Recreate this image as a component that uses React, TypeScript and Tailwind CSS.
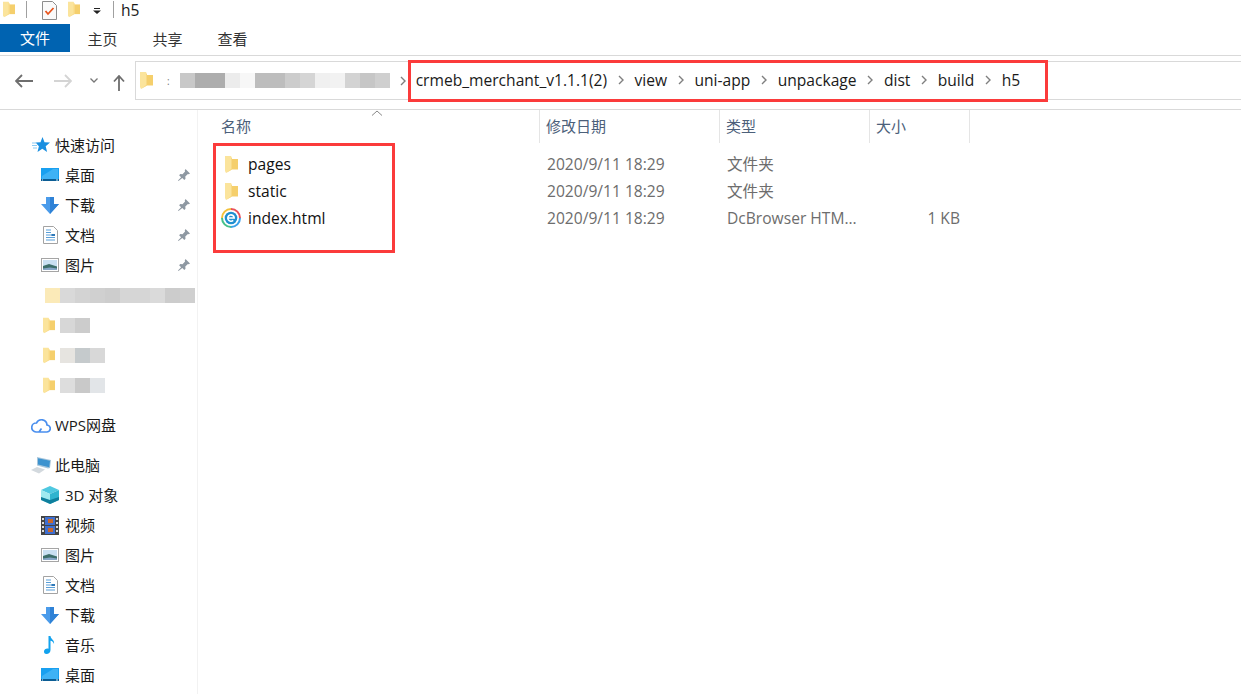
const Folder = ({ className = "w-[13px] h-[17px]" }: { className?: string }) => (
  <svg viewBox="0 0 13 17" className={`${className} shrink-0`}>
    <path d="M6 3h7v10.500H6z" fill="#f5cf6c" />
    <path d="M0 0h6l1 2v11.500L1 17l-1-2z" fill="#fbe49c" />
    <path d="M6 2l1 0v11.500L1 17l5-4z" fill="#f8d984" />
  </svg>
);

const Pin = () => (
  <svg viewBox="0 0 14 14" className="w-[14px] h-[14px] shrink-0">
    <path d="M8.500 1l4.500 4.500-1.200.8-.9-.4-2.600 2.600.2 2.200-1.200 1.200-2-2L1.500 13 1 12.500l3.100-3.300-2-2L3.300 6l2.200.2 2.600-2.600-.4-.9z" fill="#8e98a2" />
  </svg>
);

const DesktopIcon = () => (
  <svg viewBox="0 0 18 14" className="w-[18px] h-[14px]">
    <rect width="18" height="13" fill="#19a0f0" />
    <path d="M1 11V8L12 1h5v10z" fill="#3fb2f5" />
    <rect y="11" width="18" height="2" fill="#0b5d94" />
    <rect x="15" y="11.500" width="2" height="1" fill="#d5eefc" />
    <rect x="1" y="11.500" width="1" height="1" fill="#d5eefc" />
  </svg>
);

const DownloadIcon = () => (
  <svg viewBox="0 0 18 17" className="w-[18px] h-[17px]">
    <path d="M5 0h8v7h5l-9 10-9-10h5z" fill="#4a9bea" />
    <path d="M9 0h4v7h5l-9 10z" fill="#2f82d6" />
  </svg>
);

const DocIcon = () => (
  <svg viewBox="0 0 15 18" className="w-[15px] h-[18px]">
    <path d="M.5.500h10l4 4v13H.5z" fill="#fff" stroke="#a3a3a3" />
    <path d="M3 4h5M3 6.500h5M3 9h9M3 11.500h9M3 14h9" stroke="#5a9fd8" />
    <rect x="8.500" y="8" width="3.500" height="2" fill="#2f79b9" />
  </svg>
);

const PictureIcon = () => (
  <svg viewBox="0 0 18 14" className="w-[18px] h-[14px]">
    <rect x=".5" y=".5" width="17" height="13" fill="#fff" stroke="#a5a5a5" />
    <rect x="2" y="2" width="14" height="10" fill="#c9e0f2" />
    <path d="M2 8l6-2 8 2.500V12H2z" fill="#3c6e6a" />
    <path d="M2 10.500l7-1 7 1V12H2z" fill="#86a6c8" />
  </svg>
);

const CubeIcon = () => (
  <svg viewBox="0 0 18 18" className="w-[18px] h-[18px]">
    <path d="M9 0l9 4-9 4-9-4z" fill="#4fc8e0" />
    <path d="M0 4l9 4v10l-9-4z" fill="#9feaf0" />
    <path d="M18 4L9 8v10l9-4z" fill="#2fb4cf" />
    <path d="M0 11l9 3v4l-9-4zM18 11l-9 3v4l9-4z" fill="#0e7f9d" />
  </svg>
);

const VideoIcon = () => (
  <svg viewBox="0 0 18 19" className="w-[18px] h-[19px]">
    <rect width="18" height="19" fill="#444" />
    <rect x="4" y="1" width="10" height="8" fill="#3f6fd0" />
    <rect x="4" y="10" width="10" height="8" fill="#3f6fd0" />
    <path d="M7 3h5v4H7zM7 12h5v4H7z" fill="#c8672c" />
    <path d="M1 2h2v2H1zM1 6h2v2H1zM1 10h2v2H1zM1 14h2v2H1zM15 2h2v2h-2zM15 6h2v2h-2zM15 10h2v2h-2zM15 14h2v2h-2z" fill="#ddd" />
  </svg>
);

const MusicIcon = () => (
  <svg viewBox="0 0 12 18" className="w-[12px] h-[18px]">
    <path d="M4.500 0H6.500c0 3 4.500 4 3.500 8-.5-2-2-3-3.500-3.300V14c0 2.500-2 4-4 4S0 17 0 15.200 2.500 12 4.500 12.700z" fill="#12a2ee" />
  </svg>
);

const QuickIcon = () => (
  <svg viewBox="0 0 18 16" className="w-[18px] h-[16px]">
    <path d="M10.500 0l2 5.300 5.500.3-4.300 3.600 1.400 5.800-4.800-3.200-4.800 3.200 1.400-5.800L3.500 5.600 8.500 5.300z" fill="#1a8fe0" />
    <path d="M0 6h5M0 8.500h5M1 11h4" stroke="#8ccbf4" />
  </svg>
);

const CloudIcon = () => (
  <svg viewBox="0 0 20 16" className="w-[20px] h-[16px]">
    <path d="M5 15h10.500a3.500 3.500 0 0 0 .5-7 5.500 5.500 0 0 0-10.500-2A4.500 4.500 0 0 0 5 15zM8 15l2.500-3.500" fill="none" stroke="#4a8fee" strokeWidth="1.700" />
  </svg>
);

const PcIcon = () => (
  <svg viewBox="0 0 20 17" className="w-[20px] h-[17px]">
    <path d="M6 0l14 3-1 8-2 .5-11-3z" fill="#a8c6dc" />
    <path d="M7 1.200l12 2.600-.8 6.400-11.200-2.700z" fill="#3d93cf" />
    <path d="M0 13l6-3 8 2.500-6 4z" fill="#d3d9de" />
  </svg>
);

const EdgeIcon = () => (
  <svg viewBox="0 0 20 20" className="w-[20px] h-[20px] shrink-0">
    <circle cx="10" cy="10" r="9" fill="#fff" />
    <path d="M10 1a9 9 0 0 1 9 9" fill="none" stroke="#e8505b" strokeWidth="2" />
    <path d="M19 10a9 9 0 0 1-9 9" fill="none" stroke="#3aa0e8" strokeWidth="2" />
    <path d="M10 19a9 9 0 0 1-9-9" fill="none" stroke="#45c08a" strokeWidth="2" />
    <path d="M1 10a9 9 0 0 1 9-9" fill="none" stroke="#f3c13a" strokeWidth="2" />
    <circle cx="10" cy="10" r="6.300" fill="#1f8fd0" />
    <path d="M6.800 10h6.400a3.200 3.200 0 1 0-1 2.400" fill="none" stroke="#fff" strokeWidth="1.600" />
  </svg>
);

const Chevron = () => (
  <svg viewBox="0 0 6 10" className="w-[6px] h-[10px] shrink-0">
    <path d="M1 1l4 4-4 4" fill="none" stroke="#7f7f7f" strokeWidth="1.400" />
  </svg>
);

const Mosaic = ({ colors, h = "h-[15px]" }: { colors: string[]; h?: string }) => (
  <div className={`flex ${h}`}>
    {colors.map((c, i) => (
      <div key={i} className="w-[15px] h-full" style={{ background: c }} />
    ))}
  </div>
);

const NavRow = ({ icon, label, pin }: { icon: React.ReactNode; label: string; pin?: boolean }) => (
  <div className="h-[30px] flex items-center pl-[41px] pr-[6px]">
    <div className="w-[18px] flex justify-center">{icon}</div>
    <span className="ml-[6px] flex-1">{label}</span>
    {pin && <Pin />}
  </div>
);

const NavHead = ({ icon, label }: { icon: React.ReactNode; label: string }) => (
  <div className="h-[30px] flex items-center pl-[31px]">
    <div className="w-[20px] flex justify-center">{icon}</div>
    <span className="ml-[4px]">{label}</span>
  </div>
);

const BlurRow = ({ colors }: { colors: string[] }) => (
  <div className="h-[30px] flex items-center pl-[43px]">
    <Folder className="w-[12px] h-[17px]" />
    <div className="ml-[5px]">
      <Mosaic colors={colors} />
    </div>
  </div>
);

const files = [
  { name: "pages", type: "文件夹", size: "", icon: <Folder /> },
  { name: "static", type: "文件夹", size: "", icon: <Folder /> },
  { name: "index.html", type: "DcBrowser HTM...", size: "1 KB", icon: <EdgeIcon /> },
];

const crumbs = ["view", "uni-app", "unpackage", "dist", "build", "h5"];

export default function App() {
  return (
    <div className="relative w-[1241px] h-[694px] overflow-hidden bg-white text-[15px] text-[#1a1a1a] font-['Open_Sans','Noto_Sans_CJK_SC',sans-serif]">
      {/* title bar */}
      <div className="h-[24px] flex items-start pl-[3px] pt-[1px]">
        <Folder className="w-[12px] h-[17px]" />
        <div className="ml-[11px] w-px h-[17px] bg-[#a0a0a0]" />
        <svg viewBox="0 0 15 19" className="ml-[15px] w-[15px] h-[19px]">
          <path d="M.5.500h10l4 4v14H.5z" fill="#fafafa" stroke="#8d8d8d" />
          <path d="M3.500 10l2.500 3 5.500-6" fill="none" stroke="#e8541c" strokeWidth="1.800" />
        </svg>
        <Folder className="ml-[11px] w-[12px] h-[17px]" />
        <svg viewBox="0 0 8 6" className="ml-[13px] mt-[7px] w-[8px] h-[6px]">
          <path d="M1 0h6v1H1zM0 2.500h8L4 6z" fill="#222" />
        </svg>
        <div className="ml-[12px] w-px h-[17px] bg-[#a0a0a0]" />
        <span className="ml-[7px] text-[15.6px] leading-[18px]">h5</span>
      </div>

      {/* ribbon tabs */}
      <div className="h-[28px] flex items-center">
        <div className="w-[70px] h-full bg-[#0063b1] text-white flex items-center justify-center">文件</div>
        <div className="w-[65px] text-center text-[#333] pt-[2px]">主页</div>
        <div className="w-[65px] text-center text-[#333] pt-[2px]">共享</div>
        <div className="w-[65px] text-center text-[#333] pt-[2px]">查看</div>
      </div>

      {/* address row */}
      <div className="mt-[3px] h-[55px] border-y border-[#d9d9d9] flex items-center pl-[15px] pb-[4px]">
        <svg viewBox="0 0 18 14" className="w-[18px] h-[14px]">
          <path d="M7 1L1 7l6 6M1 7h17" fill="none" stroke="#6e6e6e" strokeWidth="1.800" />
        </svg>
        <svg viewBox="0 0 18 14" className="ml-[21px] w-[18px] h-[14px]">
          <path d="M11 1l6 6-6 6M17 7H0" fill="none" stroke="#d4d4d4" strokeWidth="1.800" />
        </svg>
        <svg viewBox="0 0 8 5" className="ml-[18px] w-[8px] h-[5px]">
          <path d="M.5.500L4 4 7.500.5" fill="none" stroke="#777" strokeWidth="1.300" />
        </svg>
        <svg viewBox="0 0 12 16" className="ml-[15px] mt-[4px] w-[12px] h-[16px]">
          <path d="M1 6.500L6 1l5 5.500M6 1v15" fill="none" stroke="#6e6e6e" strokeWidth="1.800" />
        </svg>
        <div className="ml-[10px] flex-1 h-[39px] border border-[#d9d9d9] border-r-0 flex items-center pl-[4px]">
          <Folder />
          <span className="ml-[14px] text-[10px] leading-none text-[#777]">:</span>
          <div className="ml-[10px]">
            <Mosaic colors={["#c8c8c8", "#adadad", "#adadad", "#ececec", "#f7f7f7", "#bdbdbd", "#bdbdbd", "#ccc", "#d5d5d5", "#f0f0f0", "#f2f2f2", "#d3d3d3", "#c6c6c6", "#cfcfcf"]} />
          </div>
          <div className="ml-[10px]"><Chevron /></div>
          <span className="ml-[10px] text-[15.6px]">crmeb_merchant_v1.1.1(2)</span>
          {crumbs.map((c) => (
            <div key={c} className="flex items-center">
              <div className="mx-[10.7px]"><Chevron /></div>
              <span className="text-[15.6px]">{c}</span>
            </div>
          ))}
        </div>
      </div>

      {/* main */}
      <div className="flex h-[584px]">
        <aside className="w-[198px] shrink-0 border-r border-[#f2f2f2] pt-[20px]">
          <NavHead icon={<QuickIcon />} label="快速访问" />
          <NavRow icon={<DesktopIcon />} label="桌面" pin />
          <NavRow icon={<DownloadIcon />} label="下载" pin />
          <NavRow icon={<DocIcon />} label="文档" pin />
          <NavRow icon={<PictureIcon />} label="图片" pin />
          <div className="h-[30px] flex items-center pl-[45px]">
            <Mosaic colors={["#fbeab8", "#d9d9d9", "#d3d3d3", "#d0d0d0", "#cdcdcd", "#d6d6d6", "#d6d6d6", "#dadada", "#cccccc", "#cfcfcf"]} />
          </div>
          <BlurRow colors={["#d7d7d7", "#cccccc"]} />
          <BlurRow colors={["#e6e4e0", "#c5cacc", "#d8d8d8"]} />
          <BlurRow colors={["#dddddd", "#c9c9c9", "#e2e5e8"]} />
          <div className="mt-[10px]">
            <NavHead icon={<CloudIcon />} label="WPS网盘" />
          </div>
          <div className="mt-[10px]">
            <NavHead icon={<PcIcon />} label="此电脑" />
          </div>
          <NavRow icon={<CubeIcon />} label="3D 对象" />
          <NavRow icon={<VideoIcon />} label="视频" />
          <NavRow icon={<PictureIcon />} label="图片" />
          <NavRow icon={<DocIcon />} label="文档" />
          <NavRow icon={<DownloadIcon />} label="下载" />
          <NavRow icon={<MusicIcon />} label="音乐" />
          <NavRow icon={<DesktopIcon />} label="桌面" />
        </aside>

        <main className="flex-1 pl-[17px]">
          <div className="relative h-[33px] flex text-[#4c607a]">
            <svg viewBox="0 0 12 6" className="absolute left-[156px] top-0 w-[12px] h-[6px]">
              <path d="M1 5.500L6 1l5 4.500" fill="none" stroke="#888" />
            </svg>
            <div className="w-[325px] pl-[6px] flex items-center border-r border-[#e5e5e5]">名称</div>
            <div className="w-[180px] pl-[6px] flex items-center border-r border-[#e5e5e5]">修改日期</div>
            <div className="w-[150px] pl-[6px] flex items-center border-r border-[#e5e5e5]">类型</div>
            <div className="w-[100px] pl-[6px] flex items-center border-r border-[#e5e5e5]">大小</div>
          </div>
          <div className="pt-[8px]">
            {files.map((f) => (
              <div key={f.name} className="h-[27px] flex items-center">
                <div className="w-[325px] flex items-center">
                  <div className="w-[20px] ml-[6px] flex justify-center">{f.icon}</div>
                  <span className="ml-[5px] pl-[2px] text-[15.6px] text-[#111]">{f.name}</span>
                </div>
                <div className="w-[180px] pl-[7px] text-[15.6px] text-[#6d6d6d]">2020/9/11 18:29</div>
                <div className="w-[150px] pl-[7px] text-[15.6px] text-[#6d6d6d]">{f.type}</div>
                <div className="w-[90px] text-right text-[15.6px] text-[#6d6d6d]">{f.size}</div>
              </div>
            ))}
          </div>
        </main>
      </div>

      {/* red annotation boxes */}
      <div className="absolute left-[408px] top-[60px] w-[640px] h-[42px] border-[3px] border-[#fb3b3b]" />
      <div className="absolute left-[213px] top-[143px] w-[182px] h-[110px] border-[3px] border-[#fb3b3b]" />
    </div>
  );
}
